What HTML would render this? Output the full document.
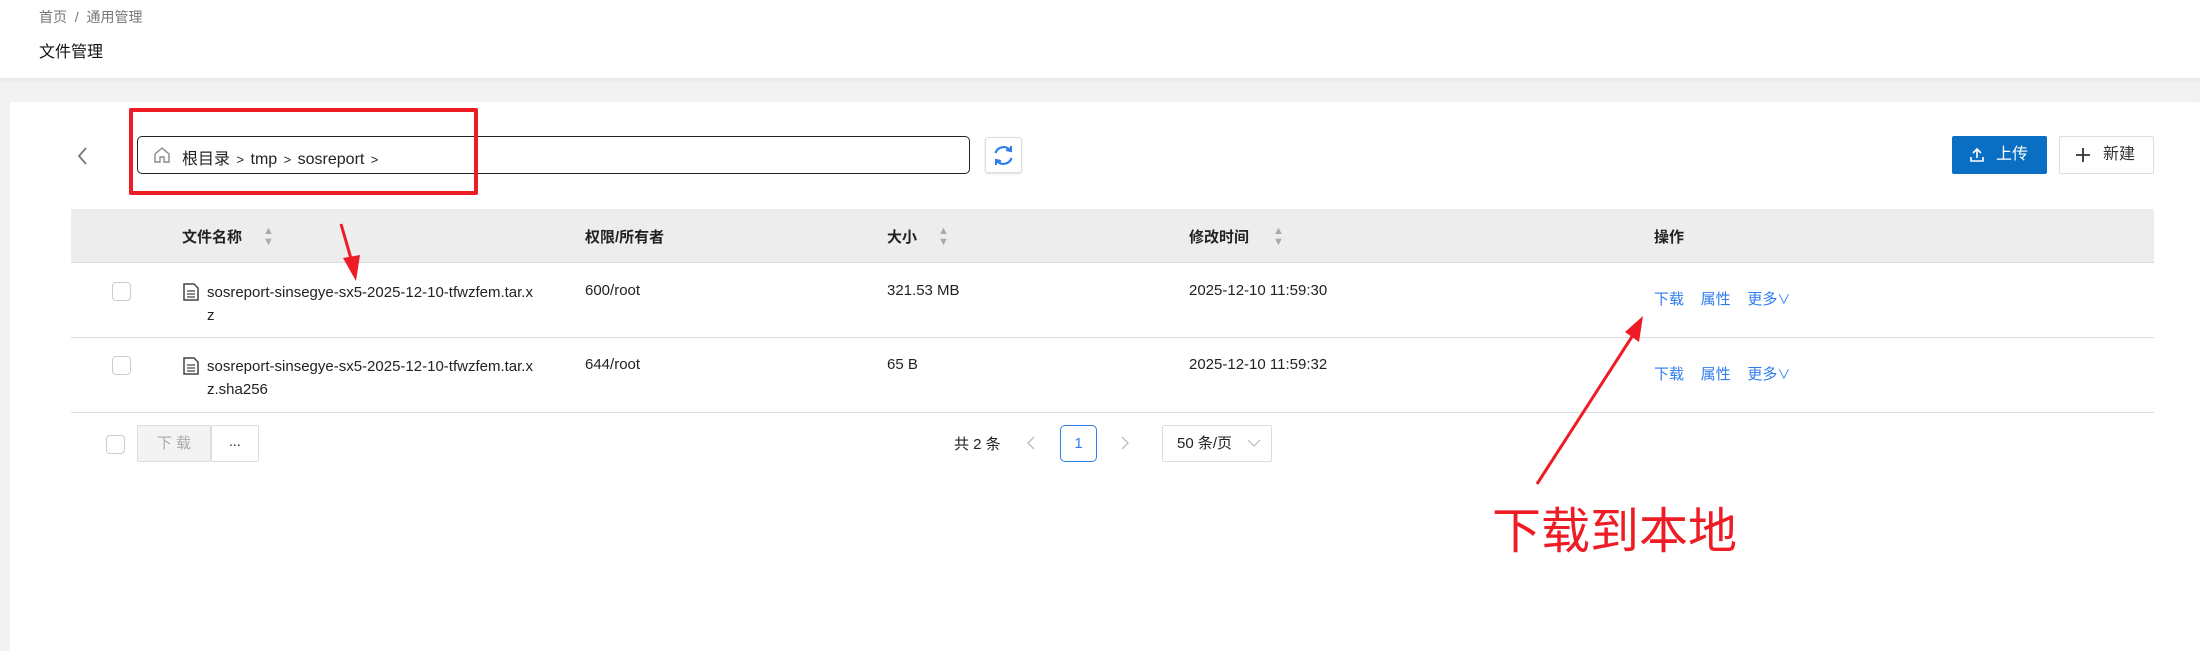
<!DOCTYPE html>
<html><head><meta charset="utf-8"><style>
*{margin:0;padding:0;box-sizing:border-box}
body{width:2200px;height:651px;background:#fff;font-family:"Liberation Sans","Noto Sans CJK SC",sans-serif;color:#222;position:relative;overflow:hidden}
.a{position:absolute;white-space:nowrap}
.cb{position:absolute;width:19px;height:19px;border:1px solid #ccc;border-radius:4px;background:#fff}
.blue{color:#2f7ded}
.sort{position:absolute;font-size:11px;color:#aaa;line-height:11px}
</style></head><body>
<div class="a" style="left:39px;top:7px;font-size:14px;color:#777">首页 &nbsp;/&nbsp; 通用管理</div>
<div class="a" style="left:39px;top:38px;font-size:16px;color:#111">文件管理</div>
<div class="a" style="left:0;top:78px;width:2200px;height:24px;background:#f2f2f2;box-shadow:inset 0 4px 4px -2px #e4e4e4"></div>
<div class="a" style="left:0;top:102px;width:10px;height:549px;background:#f2f2f2"></div>
<svg class="a" style="left:76px;top:146px" width="14" height="20"><path d="M10 2 L3 10 L10 18" fill="none" stroke="#777" stroke-width="1.8"/></svg>
<div class="a" style="left:137px;top:136px;width:833px;height:38px;border:1.3px solid #222;border-radius:5px"></div>
<svg class="a" style="left:153px;top:146px" width="18" height="18"><path d="M2 8 L9 2 L16 8 V16 H11 V11 H7 V16 H2 Z" fill="none" stroke="#888" stroke-width="1.4"/></svg>
<div class="a" style="left:182px;top:145px;font-size:16px;color:#222;word-spacing:2px">根目录 <span style="font-size:13px">&gt;</span> tmp <span style="font-size:13px">&gt;</span> sosreport <span style="font-size:13px">&gt;</span></div>
<div class="a" style="left:985px;top:137px;width:37px;height:36px;border:1px solid #ddd;border-radius:3px;box-shadow:0 1px 2px #ddd"></div>
<svg class="a" style="left:991px;top:143px" width="25" height="25"><path d="M19 7 A8.5 8.5 0 0 0 4.5 10" fill="none" stroke="#2f7ded" stroke-width="2.2"/><path d="M6 18 A8.5 8.5 0 0 0 20.5 15" fill="none" stroke="#2f7ded" stroke-width="2.2"/><path d="M15 7 L20 8 L20 3" fill="none" stroke="#2f7ded" stroke-width="2"/><path d="M10 18 L5 17 L5 22" fill="none" stroke="#2f7ded" stroke-width="2"/></svg>
<div class="a" style="left:129px;top:108px;width:349px;height:87px;border:4px solid #ee1c25;border-radius:2px"></div>
<div class="a" style="left:1952px;top:136px;width:95px;height:38px;background:#0a6fc2;border-radius:2px;color:#fff;font-size:16px;line-height:38px;padding-left:44px">上传</div>
<svg class="a" style="left:1970px;top:147px" width="14" height="16"><path d="M7 11 V2 M3 6 L7 2 L11 6 M1 10 V14 H13 V10" fill="none" stroke="#fff" stroke-width="1.6"/></svg>
<div class="a" style="left:2059px;top:136px;width:95px;height:38px;border:1px solid #ddd;border-radius:2px;font-size:16px;color:#333;line-height:36px;padding-left:43px">新建</div>
<svg class="a" style="left:2075px;top:147px" width="16" height="16"><path d="M8 1 V15 M1 8 H15" stroke="#333" stroke-width="1.8"/></svg>
<div class="a" style="left:71px;top:209px;width:2083px;height:54px;background:#ededed;border-bottom:1px solid #ddd"></div>
<div class="a" style="left:182px;top:226px;font-size:15px;font-weight:bold">文件名称</div>
<div class="sort" style="left:263px;top:226px">▲<br>▼</div>
<div class="a" style="left:585px;top:226px;font-size:15px;font-weight:bold">权限/所有者</div>
<div class="a" style="left:887px;top:226px;font-size:15px;font-weight:bold">大小</div>
<div class="sort" style="left:938px;top:226px">▲<br>▼</div>
<div class="a" style="left:1189px;top:226px;font-size:15px;font-weight:bold">修改时间</div>
<div class="sort" style="left:1273px;top:226px">▲<br>▼</div>
<div class="a" style="left:1654px;top:226px;font-size:15px;font-weight:bold">操作</div>
<div class="a" style="left:71px;top:337px;width:2083px;height:1px;background:#ddd"></div>
<div class="a" style="left:71px;top:412px;width:2083px;height:1px;background:#ddd"></div>
<div class="cb" style="left:112px;top:282px"></div>
<div class="cb" style="left:112px;top:356px"></div>
<svg class="a" style="left:183px;top:283px" width="16" height="18"><path d="M1 1 H11 L15 5 V17 H1 Z" fill="none" stroke="#444" stroke-width="1.5"/><path d="M4 8 H12 M4 11 H12 M4 14 H12" stroke="#444" stroke-width="1.3"/></svg>
<svg class="a" style="left:183px;top:357px" width="16" height="18"><path d="M1 1 H11 L15 5 V17 H1 Z" fill="none" stroke="#444" stroke-width="1.5"/><path d="M4 8 H12 M4 11 H12 M4 14 H12" stroke="#444" stroke-width="1.3"/></svg>
<div class="a" style="left:207px;top:281px;font-size:15px;line-height:23px">sosreport-sinsegye-sx5-2025-12-10-tfwzfem.tar.x<br>z</div>
<div class="a" style="left:207px;top:355px;font-size:15px;line-height:23px">sosreport-sinsegye-sx5-2025-12-10-tfwzfem.tar.x<br>z.sha256</div>
<div class="a" style="left:585px;top:282px;font-size:15px">600/root</div>
<div class="a" style="left:585px;top:356px;font-size:15px">644/root</div>
<div class="a" style="left:887px;top:282px;font-size:15px">321.53 MB</div>
<div class="a" style="left:887px;top:356px;font-size:15px">65 B</div>
<div class="a" style="left:1189px;top:282px;font-size:15px">2025-12-10 11:59:30</div>
<div class="a" style="left:1189px;top:356px;font-size:15px">2025-12-10 11:59:32</div>
<div class="a blue" style="left:1654px;top:288px;font-size:15px">下载&nbsp;&nbsp;&nbsp;&nbsp;属性&nbsp;&nbsp;&nbsp;&nbsp;更多<span style="font-size:13px">∨</span></div>
<div class="a blue" style="left:1654px;top:363px;font-size:15px">下载&nbsp;&nbsp;&nbsp;&nbsp;属性&nbsp;&nbsp;&nbsp;&nbsp;更多<span style="font-size:13px">∨</span></div>
<div class="cb" style="left:106px;top:435px"></div>
<div class="a" style="left:137px;top:425px;width:74px;height:37px;background:#f3f3f3;border:1px solid #ddd;border-radius:2px;color:#aaa;font-size:15px;line-height:35px;padding-left:19px;letter-spacing:4px">下载</div>
<div class="a" style="left:211px;top:425px;width:48px;height:37px;border:1px solid #ddd;border-radius:2px;font-size:14px;line-height:31px;padding-left:17px">...</div>
<div class="a" style="left:954px;top:433px;font-size:15px">共 2 条</div>
<svg class="a" style="left:1026px;top:435px" width="10" height="16"><path d="M8 2 L2 8 L8 14" fill="none" stroke="#bbb" stroke-width="1.3"/></svg>
<div class="a" style="left:1060px;top:425px;width:37px;height:37px;border:1px solid #2f7ded;border-radius:5px;color:#2f7ded;font-size:15px;text-align:center;line-height:35px">1</div>
<svg class="a" style="left:1120px;top:435px" width="10" height="16"><path d="M2 2 L8 8 L2 14" fill="none" stroke="#bbb" stroke-width="1.3"/></svg>
<div class="a" style="left:1162px;top:425px;width:110px;height:37px;border:1px solid #ddd;border-radius:2px;font-size:15px;line-height:35px;padding-left:14px">50 条/页</div>
<svg class="a" style="left:1247px;top:438px" width="14" height="10"><path d="M1 2 L7 8 L13 2" fill="none" stroke="#bbb" stroke-width="1.2"/></svg>
<svg class="a" style="left:0;top:0" width="2200" height="651"><path d="M341 224 L352 262" stroke="#ee1c25" stroke-width="3"/><path d="M343 258 L356 281 L360 255 Z" fill="#ee1c25"/>
<path d="M1537 484 L1635 332" stroke="#ee1c25" stroke-width="3"/><path d="M1625 332 L1643 316 L1639 342 Z" fill="#ee1c25"/></svg>
<div class="a" style="left:1492px;top:492px;font-size:49px;color:#ee1c25">下载到本地</div>
</body></html>
